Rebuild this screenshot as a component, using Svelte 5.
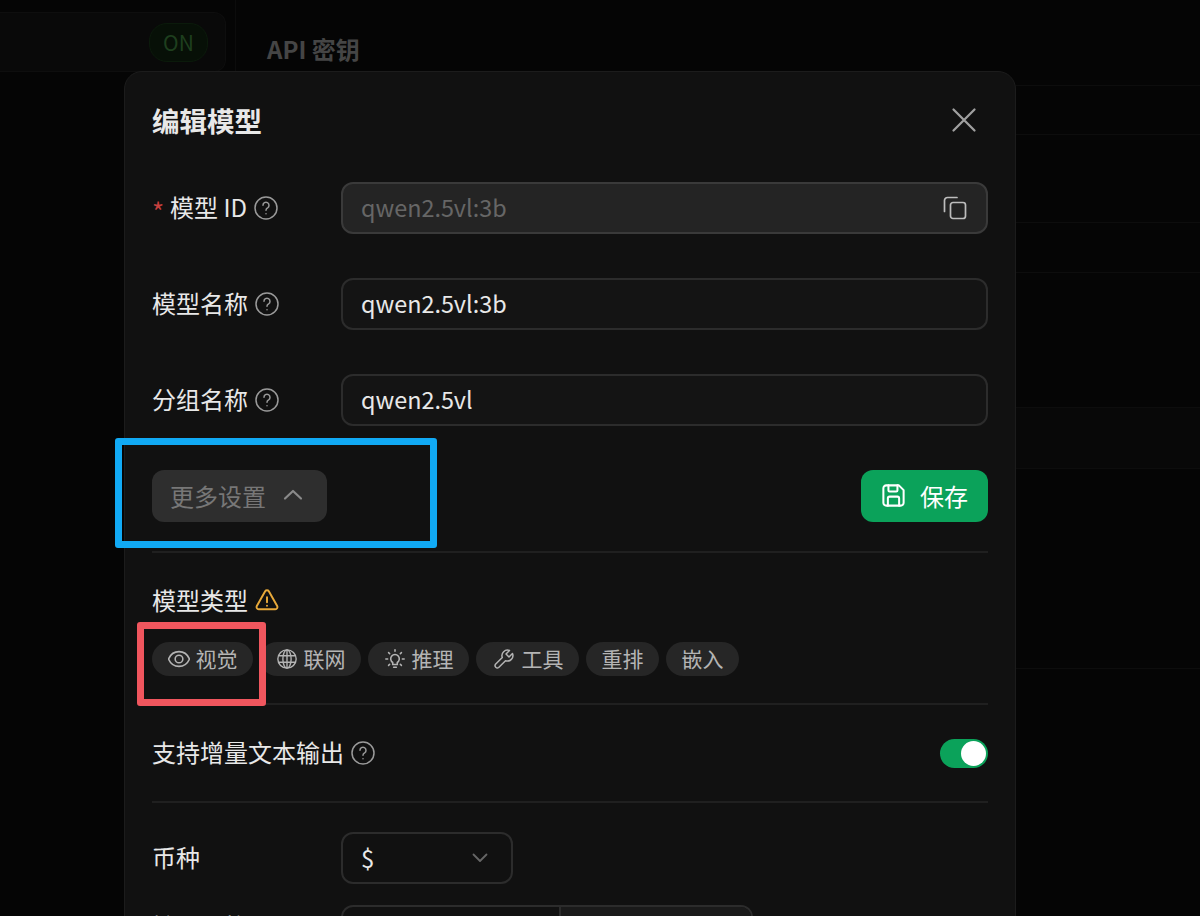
<script>
	const chips = [
		{ label: "视觉", icon: "eye" },
		{ label: "联网", icon: "globe" },
		{ label: "推理", icon: "bulb" },
		{ label: "工具", icon: "wrench" },
		{ label: "重排", icon: "" },
		{ label: "嵌入", icon: "" }
	];

	// faint table rows behind the dialog
	const bgRows = [
		{ height: 49 },
		{ height: 88 },
		{ height: 50 },
		{ height: 135 },
		{ height: 61, lit: true },
		{ height: 200 }
	];
</script>

<div class="page">
	<aside class="side">
		<div class="side-card">
			<span class="on">ON</span>
		</div>
	</aside>
	<main class="main">
		<h2 class="main-title">API 密钥</h2>
		<div class="main-rows">
			{#each bgRows as r}
				<div class="main-row" class:lit={r.lit} style:height="{r.height}px"></div>
			{/each}
		</div>
	</main>

	<section class="modal">
		<header class="modal-head">
			<h1>编辑模型</h1>
			<svg class="close" viewBox="0 0 24 24" width="36" height="36" fill="none" stroke="currentColor" stroke-width="1.5" stroke-linecap="round" stroke-linejoin="round">
				<path d="M5 19 19 5M5 5l14 14" />
			</svg>
		</header>

		<div class="field first">
			<div class="label"><span class="req">*</span>模型 ID {@render help()}</div>
			<div class="input disabled">
				<span>qwen2.5vl:3b</span>
				<svg class="copy" viewBox="0 0 24 24" width="24" height="24" fill="none" stroke="currentColor" stroke-width="1.7" stroke-linecap="round" stroke-linejoin="round">
					<rect x="7.500" y="6.500" width="15" height="16" rx="2.500" />
					<path d="M1.500 15.500V4.500a3 3 0 0 1 3-3H14" />
				</svg>
			</div>
		</div>
		<div class="field">
			<div class="label">模型名称 {@render help()}</div>
			<div class="input"><span>qwen2.5vl:3b</span></div>
		</div>
		<div class="field">
			<div class="label">分组名称 {@render help()}</div>
			<div class="input"><span>qwen2.5vl</span></div>
		</div>

		<div class="actions">
			<button class="more">
				更多设置
				<svg viewBox="0 0 24 24" width="24" height="24" fill="none" stroke="currentColor" stroke-width="2.200" stroke-linecap="round" stroke-linejoin="round"><path d="m4 15.500 8-7.500 8 7.500" /></svg>
			</button>
			<button class="save">
				<svg viewBox="0 0 24 24" width="27" height="27" fill="none" stroke="currentColor" stroke-width="1.800" stroke-linecap="round" stroke-linejoin="round">
					<path d="M3 5.500A2.500 2.500 0 0 1 5.500 3h11.300L21 7.200v11.300a2.500 2.500 0 0 1-2.500 2.500h-13A2.500 2.500 0 0 1 3 18.500z" />
					<path d="M7.500 3v4.500a1 1 0 0 0 1 1h6a1 1 0 0 0 1-1V3" />
					<path d="M7 21v-6.500a1.500 1.500 0 0 1 1.500-1.500h7a1.500 1.500 0 0 1 1.500 1.500V21" />
				</svg>
				保存
			</button>
		</div>

		<div class="section types">
			<div class="type-label">
				模型类型
				<svg viewBox="0 0 24 24" width="26" height="26" fill="none" stroke="#e8a93a" stroke-width="1.800" stroke-linecap="round" stroke-linejoin="round">
					<path d="M10.300 4 2.600 17.500A2 2 0 0 0 4.300 20.500h15.400a2 2 0 0 0 1.700-3L13.700 4a2 2 0 0 0-3.400 0z" />
					<path d="M12 9.500v4.500M12 17.200v.1" />
				</svg>
			</div>
			<div class="chips">
				{#each chips as c}
					<span class="chip" class:plain={!c.icon}>
						{#if c.icon === "eye"}
							<svg viewBox="2 2 20 20" width="22" height="22" fill="none" stroke="currentColor" stroke-width="1.400"><path d="M2.500 12C4.500 7.300 8 5.300 12 5.300s7.500 2 9.500 6.700c-2 4.700-5.500 6.700-9.500 6.700S4.500 16.700 2.500 12z" /><circle cx="12" cy="12" r="3.500" /></svg>
						{:else if c.icon === "globe"}
							<svg viewBox="0 0 24 24" width="22" height="22" fill="none" stroke="currentColor" stroke-width="1.500"><circle cx="12" cy="12" r="10" /><ellipse cx="12" cy="12" rx="4.500" ry="10" /><path d="M2.800 8.500h18.400M2.800 15.500h18.400M12 2v20" /></svg>
						{:else if c.icon === "bulb"}
							<svg viewBox="0 0 24 24" width="22" height="22" fill="none" stroke="currentColor" stroke-width="1.700" stroke-linecap="round"><path d="M9.500 15.800a4.700 4.700 0 1 1 5 0V18h-5zM10.500 21h3" /><path d="M12 2v1.500M5 5l1.200 1.200M19 5l-1.200 1.200M2 12h2M20 12h2M5 19l1.200-1.200M19 19l-1.200-1.200" /></svg>
						{:else if c.icon === "wrench"}
							<svg viewBox="0 0 24 24" width="24" height="24" fill="none" stroke="currentColor" stroke-width="1.500" stroke-linejoin="round"><path d="M20.500 6.500 17 10l-3-3 3.500-3.500a5.500 5.500 0 0 0-7.200 7L3.500 17.300a2.300 2.300 0 0 0 3.200 3.200l6.800-6.800a5.500 5.500 0 0 0 7-7.200z" /></svg>
						{/if}
						{c.label}
					</span>
				{/each}
			</div>
		</div>

		<div class="section toggle-row">
			<div class="label">支持增量文本输出 {@render help()}</div>
			<span class="toggle"><span class="knob"></span></span>
		</div>

		<div class="section currency">
			<div class="label">币种</div>
			<div class="select">
				<span>$</span>
				<svg viewBox="0 0 24 24" width="24" height="24" fill="none" stroke="currentColor" stroke-width="1.800" stroke-linecap="round" stroke-linejoin="round"><path d="m5.500 8.500 6.500 6.500 6.500-6.500" /></svg>
			</div>
		</div>

		<div class="field price">
			<div class="label">输入价格</div>
			<div class="split"><span></span><span></span></div>
		</div>
	</section>

	<div class="mark blue"></div>
	<div class="mark red"></div>
</div>

{#snippet help()}
	<svg class="help" viewBox="0 0 24 24" width="24" height="24" fill="none" stroke="currentColor" stroke-width="1.500" stroke-linecap="round" stroke-linejoin="round">
		<circle cx="12" cy="12" r="11" />
		<path d="M9 9.300a3 3 0 1 1 4.600 2.500c-1 .6-1.600 1.300-1.600 2.400" />
		<path d="M12 17.700v.1" />
	</svg>
{/snippet}

<style>
	:global(body) {
		margin: 0;
		background: #050505;
	}

	.page {
		position: relative;
		display: flex;
		width: 1200px;
		height: 916px;
		overflow: hidden;
		background: #050505;
		font-family: "Noto Sans CJK SC", "Noto Sans", sans-serif;
		color: #e8e8e8;
	}

	.side {
		flex: none;
		width: 236px;
		box-sizing: border-box;
		padding-top: 12px;
		border-right: 1px solid #0c0c0c;
	}

	.side-card {
		display: flex;
		justify-content: flex-end;
		align-items: center;
		box-sizing: border-box;
		width: 226px;
		height: 60px;
		padding-right: 17px;
		border: 1px solid #0e0e0e;
		border-left: none;
		border-radius: 0 12px 12px 0;
		background: #090909;
	}

	.on {
		display: flex;
		align-items: center;
		justify-content: center;
		width: 57px;
		height: 37px;
		border-radius: 18px;
		border: 1px solid #0b1a0b;
		background: #071007;
		color: #1e3f1e;
		font-size: 21px;
	}

	.main {
		flex: 1;
		padding: 31px 0 0 31px;
	}

	.main-title {
		margin: 0;
		height: 36px;
		line-height: 36px;
		font-size: 24px;
		font-weight: 700;
		color: #454545;
	}

	.main-rows {
		margin-top: 18px;
		border-top: 1px solid #0d0d0d;
	}

	.main-row {
		box-sizing: border-box;
		border-bottom: 1px solid #0d0d0d;
	}

	.main-row.lit {
		background: #080808;
	}

	.modal {
		position: absolute;
		left: 124px;
		top: 71px;
		width: 892px;
		height: 900px;
		box-sizing: border-box;
		padding: 0 27px;
		background: #111;
		border: 1px solid #1c1c1c;
		border-radius: 18px;
	}

	.modal-head {
		display: flex;
		align-items: center;
		justify-content: space-between;
		height: 96px;
	}

	.modal-head h1 {
		margin: 0;
		font-size: 27.500px;
		font-weight: 700;
		color: #e8e8e8;
	}

	.close {
		color: #a0a0a0;
		margin-right: 6px;
	}

	.field {
		display: flex;
		align-items: center;
		margin-bottom: 44px;
	}

	.field.first {
		margin-top: 14px;
	}

	.label {
		display: flex;
		align-items: center;
		gap: 7px;
		flex: none;
		width: 189px;
		padding-bottom: 2px;
		font-size: 24px;
		line-height: 36px;
		color: #e8e8e8;
		white-space: nowrap;
	}

	.req {
		width: 11px;
		padding-top: 7px;
		color: #c8403f;
		font-size: 26px;
		line-height: 29px;
	}

	.help {
		margin-top: 2px;
		color: #9a9a9a;
	}

	.input {
		flex: 1;
		display: flex;
		align-items: center;
		justify-content: space-between;
		box-sizing: border-box;
		height: 52px;
		padding: 0 18px 2px;
		border: 2px solid #2c2c2c;
		border-radius: 12px;
		font-size: 23.400px;
		color: #e8e8e8;
		background: #141414;
	}

	.input.disabled {
		background: #242424;
		border-color: #3a3a3a;
		color: #666;
	}

	.copy {
		margin: 2px 1px 0 0;
		color: #bdbdbd;
	}

	.actions {
		display: flex;
		align-items: center;
		justify-content: space-between;
		padding-bottom: 29px;
		border-bottom: 2px solid #202020;
	}

	button {
		display: flex;
		align-items: center;
		box-sizing: border-box;
		height: 52px;
		padding-bottom: 2px;
		border: none;
		border-radius: 12px;
		font-family: inherit;
		font-size: 24px;
	}

	.more {
		width: 175px;
		padding: 0 0 2px 18px;
		gap: 15px;
		background: #2e2e2e;
		color: #777;
	}

	.more svg {
		color: #8a8a8a;
	}

	.save {
		width: 127px;
		padding: 0 0 2px 19px;
		gap: 13px;
		background: #0ba25a;
		color: #fff;
	}

	.section {
		border-bottom: 2px solid #202020;
	}

	.types {
		padding: 29px 0 27px;
	}

	.type-label {
		display: flex;
		align-items: center;
		gap: 6px;
		height: 36px;
		font-size: 24px;
		line-height: 36px;
	}

	.chips {
		display: flex;
		gap: 7px;
		margin-top: 24px;
	}

	.chip {
		display: flex;
		align-items: center;
		gap: 6px;
		box-sizing: border-box;
		height: 34px;
		padding: 0 15.500px 2px;
		border-radius: 17px;
		background: #262626;
		color: #b4b4b4;
		font-size: 21px;
		white-space: nowrap;
	}

	.chip svg {
		margin-top: 2px;
	}

	.toggle-row {
		display: flex;
		align-items: center;
		justify-content: space-between;
		height: 96px;
	}

	.toggle-row .label {
		width: auto;
	}

	.toggle {
		display: flex;
		align-items: center;
		justify-content: flex-end;
		box-sizing: border-box;
		width: 48px;
		height: 29px;
		padding: 2px;
		border-radius: 15px;
		background: #0ba25a;
	}

	.knob {
		width: 25px;
		height: 25px;
		border-radius: 50%;
		background: #fff;
	}

	.currency {
		display: flex;
		align-items: center;
		border-bottom: none;
		padding-top: 29px;
		margin-bottom: 21px;
	}

	.select {
		display: flex;
		align-items: center;
		justify-content: space-between;
		box-sizing: border-box;
		width: 172px;
		height: 52px;
		padding: 0 18px 2px;
		border: 2px solid #2c2c2c;
		border-radius: 12px;
		font-size: 24px;
		color: #e8e8e8;
	}

	.select svg {
		margin: 2px 1px 0 0;
		color: #666;
	}

	.price .label {
		align-self: flex-start;
		margin-top: 3px;
	}

	.split {
		display: flex;
		width: 412px;
		height: 52px;
		box-sizing: border-box;
		border: 2px solid #2c2c2c;
		border-radius: 12px;
	}

	.split span {
		flex: none;
		width: 216px;
		border-right: 2px solid #2c2c2c;
	}

	.split span + span {
		flex: 1;
		border: none;
		background: #1a1a1a;
		border-radius: 0 10px 10px 0;
	}

	.mark {
		position: absolute;
		box-sizing: border-box;
		border-style: solid;
		border-width: 7px;
		border-radius: 3px;
	}

	.mark.blue {
		left: 115px;
		top: 438px;
		width: 322px;
		height: 110px;
		border-color: #11aaf5;
	}

	.mark.red {
		left: 137px;
		top: 622px;
		width: 129px;
		height: 84px;
		border-color: #f0565e;
	}
</style>
